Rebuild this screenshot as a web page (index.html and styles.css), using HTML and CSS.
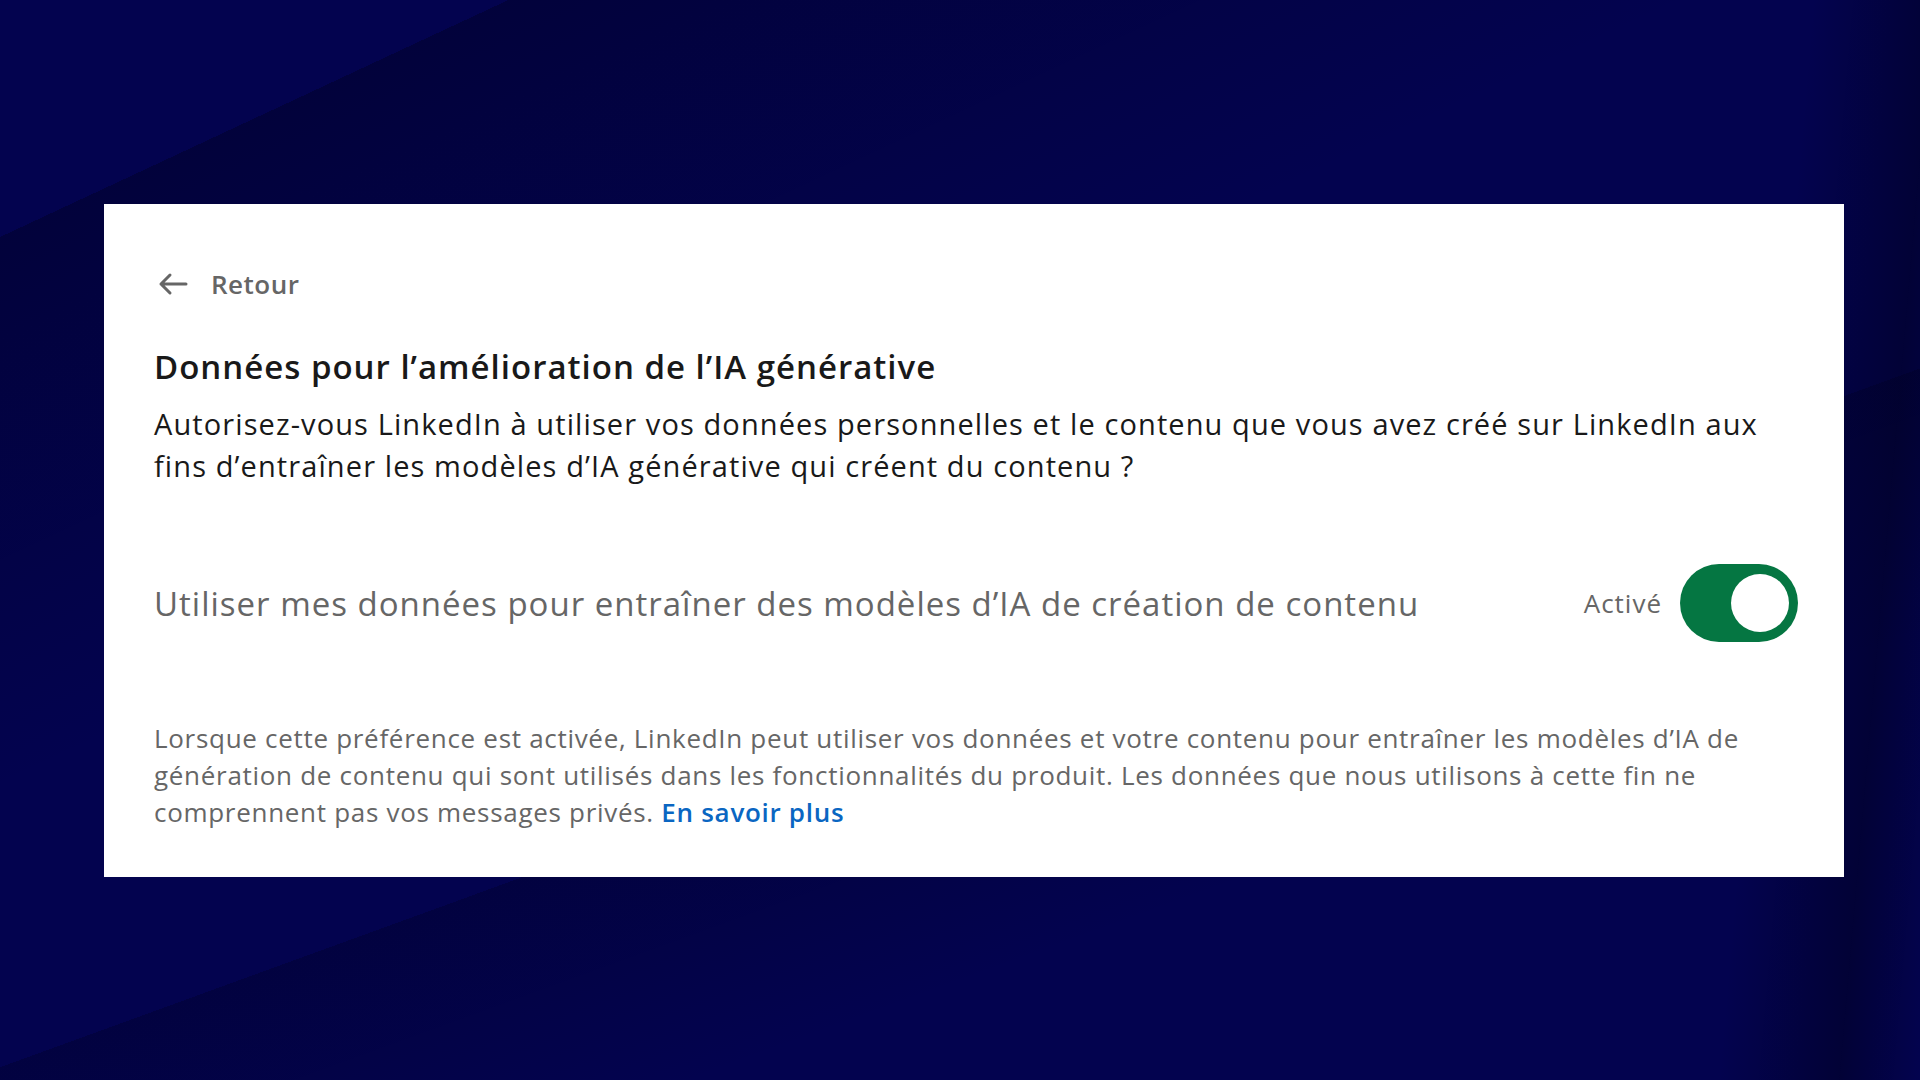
FILE: index.html
```html
<!DOCTYPE html>
<html lang="fr">
<head>
    <meta charset="UTF-8">
    <meta name="viewport" content="width=device-width, initial-scale=1.0">
    <title>Données pour l'amélioration de l'IA générative</title>
    <link rel="stylesheet" href="styles.css">
</head>
<body>

<div class="card">
    <a class="back" href="#">
        <svg class="back-icon" width="32" height="24" viewBox="0 0 32 24" aria-hidden="true">
            <path d="M29 12H4M13 3L4 12L13 21" fill="none" stroke="#666" stroke-width="3" stroke-linecap="round" stroke-linejoin="round"/>
        </svg>
        <span>Retour</span>
    </a>

    <h1 class="title">Données pour l’amélioration de l’IA générative</h1>
    <p class="intro">Autorisez-vous LinkedIn à utiliser vos données personnelles et le contenu que vous avez créé sur LinkedIn aux<br>fins d’entraîner les modèles d’IA générative qui créent du contenu ?</p>

    <div class="setting">
        <span class="setting-label">Utiliser mes données pour entraîner des modèles d’IA de création de contenu</span>
        <div class="setting-state">
            <span class="state-text">Activé</span>
            <span class="toggle"><span class="knob"></span></span>
        </div>
    </div>

    <p class="note">Lorsque cette préférence est activée, LinkedIn peut utiliser vos données et votre contenu pour entraîner les modèles d’IA de<br>génération de contenu qui sont utilisés dans les fonctionnalités du produit. Les données que nous utilisons à cette fin ne<br>comprennent pas vos messages privés. <a href="#">En savoir plus</a></p>
</div>

</body>
</html>
```

FILE: styles.css
```css
body {
    margin: 0;
    height: 1080px;
    overflow: hidden;
    font-family: "Open Sans", "Noto Sans", sans-serif;
    background-color: #03034f;
    background-image:
        linear-gradient(155deg, rgba(0, 0, 30, 0) 0, rgba(0, 0, 30, 0) 12%, rgba(0, 0, 30, 0.4) 12%, rgba(0, 0, 30, 0) 40%),
        linear-gradient(160deg, rgba(0, 0, 30, 0) 0, rgba(0, 0, 30, 0) 60%, rgba(0, 0, 30, 0.3) 60%, rgba(0, 0, 30, 0) 75%),
        linear-gradient(95deg, rgba(0, 0, 0, 0) 90%, rgba(0, 0, 30, 0.5) 96%, rgba(0, 0, 0, 0) 100%);
    padding-top: 204px;
    box-sizing: border-box;
}

.card {
    box-sizing: border-box;
    width: 1740px;
    height: 673px;
    margin-left: 104px;
    background: #fff;
    padding: 62px 46px 0 50px;
}

.back {
    display: flex;
    align-items: center;
    gap: 22px;
    height: 36px;
    color: #666;
    font-size: 26px;
    font-weight: 600;
    letter-spacing: 0.5px;
    text-decoration: none;
    margin-left: 3px;
}

.title {
    margin: 45px 0 0;
    font-size: 33px;
    line-height: 40px;
    font-weight: 600;
    color: #191919;
    letter-spacing: 1px;
    white-space: nowrap;
}

.intro {
    margin: 16px 0 0;
    font-size: 29px;
    line-height: 42px;
    color: #191919;
    letter-spacing: 1.1px;
    white-space: nowrap;
}

.setting {
    display: flex;
    align-items: center;
    justify-content: space-between;
    margin-top: 77px;
    height: 78px;
}

.setting-label {
    font-size: 33px;
    color: #666;
    letter-spacing: 1px;
    white-space: nowrap;
}

.setting-state {
    display: flex;
    align-items: center;
    gap: 18px;
}

.state-text {
    font-size: 26px;
    color: #666;
    letter-spacing: 1px;
}

.toggle {
    display: flex;
    align-items: center;
    justify-content: flex-end;
    box-sizing: border-box;
    width: 118px;
    height: 78px;
    padding: 0 9px;
    border-radius: 39px;
    background: #057642;
}

.knob {
    width: 58px;
    height: 58px;
    border-radius: 50%;
    background: #fff;
}

.note {
    margin: 78px 0 0;
    font-size: 26px;
    line-height: 37px;
    color: #666;
    letter-spacing: 0.7px;
    white-space: nowrap;
}

.note a {
    color: #0a66c2;
    font-weight: 600;
    text-decoration: none;
}
```
